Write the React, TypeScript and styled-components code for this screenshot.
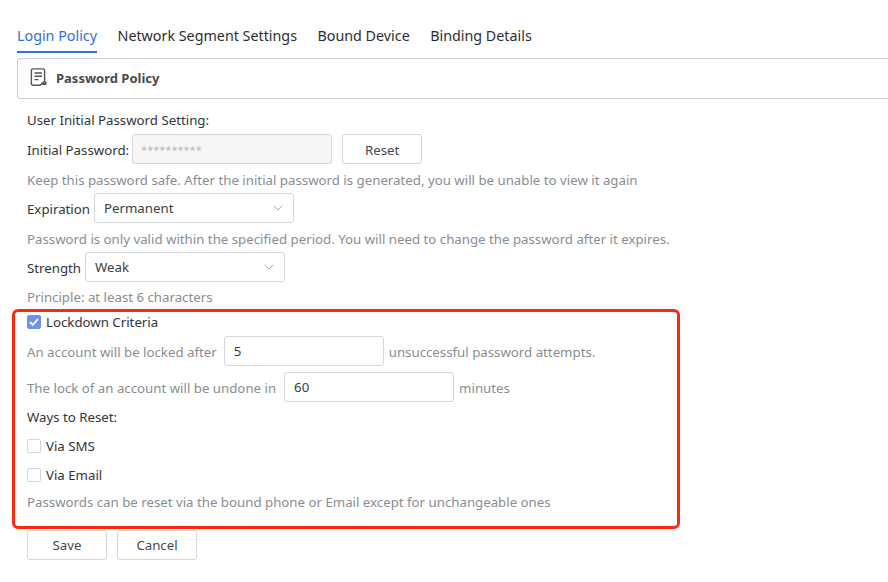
import styled, { createGlobalStyle } from "styled-components";

const GlobalStyle = createGlobalStyle`
  html, body {
    margin: 0;
    padding: 0;
    background: #fff;
    overflow: hidden;
  }
  body {
    font-family: "Noto Sans", "Open Sans", sans-serif;
    font-size: 13.25px;
    color: #33353b;
  }
`;

const Page = styled.div`
  width: 888px;
  height: 582px;
  padding: 18px 0 0 17px;
  box-sizing: border-box;
  overflow: hidden;
`;

const Tabs = styled.div`
  display: flex;
  gap: 20.5px;
  height: 35px;
`;

const Tab = styled.div<{ $active?: boolean }>`
  font-size: 14.3px;
  line-height: 35px;
  height: 35px;
  box-sizing: border-box;
  color: ${(p) => (p.$active ? "#2f6fe0" : "#2b2d33")};
  border-bottom: 2px solid ${(p) => (p.$active ? "#2f6fe0" : "transparent")};
`;

const Header = styled.div`
  display: flex;
  align-items: center;
  gap: 9px;
  height: 41px;
  width: 900px;
  margin-top: 5px;
  padding: 0 0 2px 12px;
  box-sizing: border-box;
  border: 1px solid #ccc;
  border-radius: 3px;
  font-size: 13px;
  font-weight: 700;
  color: #4a4a4a;
`;

const Form = styled.div`
  padding-left: 10px;
`;

const Line = styled.div<{ $h?: number; $top?: number }>`
  display: flex;
  align-items: center;
  height: ${(p) => p.$h ?? 20}px;
  margin-top: ${(p) => p.$top ?? 0}px;
  white-space: nowrap;
`;

const Help = styled(Line)`
  color: #8a8d94;
`;

const Label = styled.span`
  padding-top: 2px;
`;

const Field = styled.div<{ $w: number; $left: number; $disabled?: boolean }>`
  display: flex;
  align-items: center;
  justify-content: space-between;
  width: ${(p) => p.$w}px;
  height: 30px;
  margin: 0 5px 0 ${(p) => p.$left}px;
  padding: 0 10px 0 ${(p) => (p.$disabled ? 8 : 9)}px;
  box-sizing: border-box;
  border: 1px solid #d5d6dc;
  border-radius: 3px;
  background: ${(p) => (p.$disabled ? "#f7f7f8" : "#fff")};
  color: ${(p) => (p.$disabled ? "#b9bbc0" : "#3c3e44")};
  font-size: ${(p) => (p.$disabled ? "11px" : "inherit")};
`;

const Button = styled.button`
  width: 80px;
  height: 30px;
  padding: 0;
  border: 1px solid #d5d6dc;
  border-radius: 3px;
  background: #fff;
  color: #45474d;
  font: inherit;
`;

const ResetButton = styled(Button)`
  margin-left: 5px;
  padding-top: 2px;
`;

const Lockdown = styled.div`
  position: relative;
  margin-top: 5px;
  &::after {
    content: "";
    position: absolute;
    left: -15px;
    top: -3px;
    width: 668px;
    height: 220px;
    box-sizing: border-box;
    border: 3px solid #fa2a10;
    border-radius: 6px;
    pointer-events: none;
  }
`;

const CheckRow = styled(Line)`
  gap: 5px;
`;

const Check = styled.span<{ $on?: boolean }>`
  display: flex;
  align-items: center;
  justify-content: center;
  width: 14px;
  height: 14px;
  box-sizing: border-box;
  border-radius: 2px;
  border: 1px solid ${(p) => (p.$on ? "#6f93ec" : "#d5d6dc")};
  background: ${(p) => (p.$on ? "#6f93ec" : "#fff")};
`;

const Actions = styled.div`
  display: flex;
  gap: 10px;
  margin-top: 18px;
`;

const Chevron = () => (
  <svg width="10" height="6" viewBox="0 0 10 6" fill="none">
    <path d="M.7.7 5 5 9.3.7" stroke="#a8aab0" strokeWidth="1" />
  </svg>
);

const PolicyIcon = () => (
  <svg width="17" height="19" viewBox="0 0 17 19" fill="none" stroke="#555" strokeWidth="1.4">
    <path d="M10 17.3H3A1.6 1.6 0 0 1 1.4 15.7V2.5A1.6 1.6 0 0 1 3 .9h10a1.6 1.6 0 0 1 1.6 1.6v10.7L10 17.3Z" />
    <path d="M4.5 5h7.5M4.5 8.3h7.5M4.5 11.6h4" />
    <path d="M15.5 13.5v2.5h-3.5" strokeWidth="2" />
  </svg>
);

const Tick = () => (
  <svg width="10" height="8" viewBox="0 0 10 8" fill="none">
    <path d="M1 4l2.8 2.8L9 1.2" stroke="#fff" strokeWidth="1.8" />
  </svg>
);

export default function App() {
  return (
    <Page>
      <GlobalStyle />
      <Tabs>
        <Tab $active>Login Policy</Tab>
        <Tab>Network Segment Settings</Tab>
        <Tab>Bound Device</Tab>
        <Tab>Binding Details</Tab>
      </Tabs>
      <Header>
        <PolicyIcon />
        Password Policy
      </Header>
      <Form>
        <Line $top={11}>User Initial Password Setting:</Line>
        <Line $h={30} $top={4}>
          <Label>Initial Password:</Label>
          <Field $w={200} $left={3} $disabled>**********</Field>
          <ResetButton>Reset</ResetButton>
        </Line>
        <Help $top={6}>Keep this password safe. After the initial password is generated, you will be unable to view it again</Help>
        <Line $h={30} $top={3}>
          <Label>Expiration</Label>
          <Field $w={200} $left={4}>Permanent<Chevron /></Field>
        </Line>
        <Help $top={6}>Password is only valid within the specified period. You will need to change the password after it expires.</Help>
        <Line $h={30} $top={3}>
          <Label>Strength</Label>
          <Field $w={200} $left={4}>Weak<Chevron /></Field>
        </Line>
        <Help $top={5}>Principle: at least 6 characters</Help>
        <Lockdown>
          <CheckRow><Check $on><Tick /></Check>Lockdown Criteria</CheckRow>
          <Help $h={30} $top={4}>
            <Label>An account will be locked after</Label>
            <Field $w={160} $left={7}>5</Field>
            <Label>unsuccessful password attempts.</Label>
          </Help>
          <Help $h={30} $top={6}>
            <Label>The lock of an account will be undone in</Label>
            <Field $w={170} $left={8}>60</Field>
            <Label>minutes</Label>
          </Help>
          <Line $top={5}>Ways to Reset:</Line>
          <CheckRow $top={9}><Check />Via SMS</CheckRow>
          <CheckRow $top={9}><Check />Via Email</CheckRow>
          <Help $top={7}>Passwords can be reset via the bound phone or Email except for unchangeable ones</Help>
        </Lockdown>
        <Actions>
          <Button>Save</Button>
          <Button>Cancel</Button>
        </Actions>
      </Form>
    </Page>
  );
}
